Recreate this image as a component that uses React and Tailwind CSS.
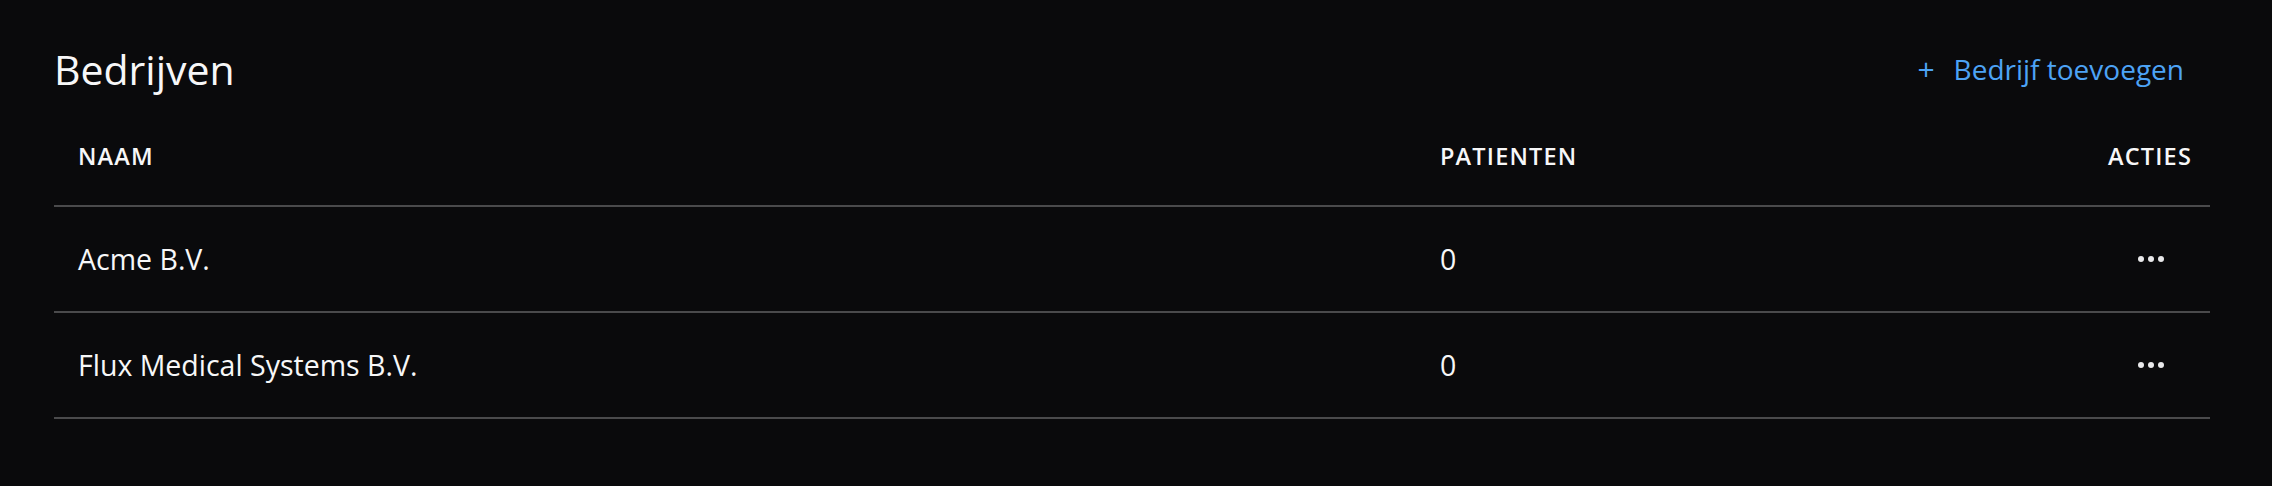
const COMPANIES = [
  { name: "Acme B.V.", patients: 0 },
  { name: "Flux Medical Systems B.V.", patients: 0 },
];

const Dots = () => (
  <svg width="26" height="6" viewBox="0 0 26 6" fill="#e8e8ea">
    <circle cx="3" cy="3" r="3" />
    <circle cx="13" cy="3" r="3" />
    <circle cx="23" cy="3" r="3" />
  </svg>
);

export default function App() {
  return (
    <div className="min-h-[486px] bg-[#0a0a0c] text-[#f7f7f8]" style={{ fontFamily: '"Open Sans", "Noto Sans", sans-serif' }}>
      <div className="ml-[54px] w-[2156px]">
        {/* Header */}
        <div className="flex h-[109px] items-start justify-between pt-[30px]">
          <h1 className="flex h-[78px] items-center text-[41px] font-medium leading-none">Bedrijven</h1>
          <button className="mr-[26px] flex h-[78px] items-center gap-[19px] text-[28px] leading-none text-[#4da3f5]">
            <span className="text-[30px]">+</span>
            <span>Bedrijf toevoegen</span>
          </button>
        </div>

        {/* Table */}
        <div className="grid h-[98px] grid-cols-[1386px_1fr_200px] items-center border-b-2 border-[#4a4a4c] text-[23.5px] font-semibold tracking-[0.05em]">
          <div className="pl-[24px]">NAAM</div>
          <div>PATIENTEN</div>
          <div className="pr-[18px] text-right">ACTIES</div>
        </div>
        {COMPANIES.map((c) => (
          <div key={c.name} className="grid h-[106px] grid-cols-[1386px_1fr_200px] items-center border-b-2 border-[#4a4a4c] text-[28.5px] font-medium">
            <div className="pl-[24px]">{c.name}</div>
            <div>{c.patients}</div>
            <div className="flex justify-end pr-[18px]">
              <div className="flex w-[83px] justify-center">
                <Dots />
              </div>
            </div>
          </div>
        ))}
      </div>
    </div>
  );
}
